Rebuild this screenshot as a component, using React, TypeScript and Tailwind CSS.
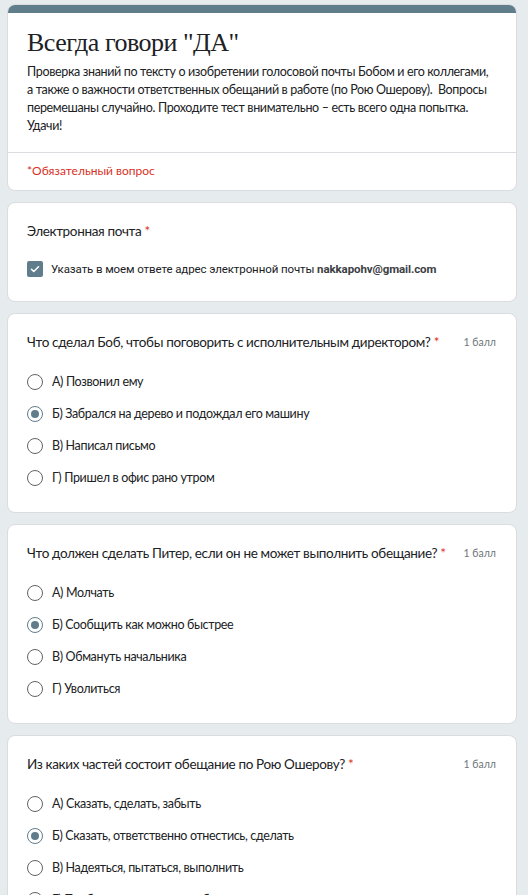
import React from "react";

const body = { fontFamily: "Lato, 'Noto Sans', sans-serif" };

function Radio({ checked }: { checked?: boolean }) {
  return (
    <span
      className={
        "flex h-[16px] w-[16px] shrink-0 items-center justify-center rounded-full border-[1.5px] " +
        (checked ? "border-[#607d8b]" : "border-[#5f6368]")
      }
    >
      {checked && <span className="h-[8px] w-[8px] rounded-full bg-[#607d8b]" />}
    </span>
  );
}

function Question({
  title,
  options,
  selected,
}: {
  title: string;
  options: string[];
  selected: number;
}) {
  return (
    <div className="rounded-[8px] border border-[#dadce0] bg-white pl-[19px] pr-[20px] pt-[18px] pb-[18px]">
      <div className="flex items-center justify-between">
        <div className="whitespace-nowrap text-[13.5px] leading-[20px] tracking-[-0.35px] text-[#202124]">
          {title}
          <span className="text-[#d93025]"> *</span>
        </div>
        <div className="shrink-0 whitespace-nowrap text-[10.5px] leading-[20px] text-[#70757a]">1 балл</div>
      </div>
      <div className="mt-[14px] flex flex-col">
        {options.map((o, i) => (
          <div key={i} className="flex h-[32px] items-center">
            <Radio checked={i === selected} />
            <span className="ml-[9px] whitespace-nowrap text-[12.5px] tracking-[-0.35px] text-[#202124]">{o}</span>
          </div>
        ))}
      </div>
    </div>
  );
}

const descLines = [
  "Проверка знаний по тексту о изобретении голосовой почты Бобом и его коллегами,",
  "а также о важности ответственных обещаний в работе (по Рою Ошерову).\u00a0 Вопросы",
  "перемешаны случайно. Проходите тест внимательно – есть всего одна попытка.",
  "Удачи!",
];

export default function App() {
  return (
    <div className="min-h-[895px] bg-[#e6ebee] pt-[4px] pb-[20px]" style={body}>
      <div className="ml-[7px] flex w-[510px] flex-col gap-[11px]">
        <div className="overflow-hidden rounded-[8px] border border-[#dadce0] bg-white">
          <div className="h-[8px] bg-[#607d8b]" />
          <div className="px-[19px] pt-[12px] pb-[17px]">
            <div
              className="text-[26px] leading-[36px] tracking-[-0.5px] text-[#202124]"
              style={{ fontFamily: "'Liberation Serif', serif" }}
            >
              Всегда говори "ДА"
            </div>
            <div className="mt-[2px] flex flex-col text-[12.5px] leading-[18px] tracking-[-0.35px] text-[#202124]">
              {descLines.map((l, i) => (
                <div key={i} className="whitespace-nowrap">
                  {l}
                </div>
              ))}
            </div>
          </div>
          <div className="h-px bg-[#dadce0]" />
          <div className="px-[19px] pt-[10px] pb-[11px] text-[12px] leading-[16px] text-[#d93025]">
            *Обязательный вопрос
          </div>
        </div>

        <div className="rounded-[8px] border border-[#dadce0] bg-white px-[19px] pt-[18px] pb-[24px]">
          <div className="text-[13.5px] leading-[20px] tracking-[-0.35px] text-[#202124]">
            Электронная почта<span className="text-[#d93025]"> *</span>
          </div>
          <div className="mt-[20px] flex items-center">
            <span className="flex h-[16px] w-[16px] items-center justify-center rounded-[2px] bg-[#607d8b]">
              <svg width="12" height="12" viewBox="0 0 24 24" fill="none">
                <path d="M5 12.5l4.5 4.5L19 7.5" stroke="white" strokeWidth="3.2" strokeLinecap="round" strokeLinejoin="round" />
              </svg>
            </span>
            <span
              className="ml-[8px] whitespace-nowrap text-[11.5px] leading-[16px] tracking-[-0.1px] text-[#202124]"
              style={{ fontFamily: "Roboto, 'Liberation Sans', sans-serif" }}
            >
              Указать в моем ответе адрес электронной почты{" "}
              <span className="font-bold text-[#3c4043]">nakkapohv@gmail.com</span>
            </span>
          </div>
        </div>

        <Question
          title="Что сделал Боб, чтобы поговорить с исполнительным директором?"
          selected={1}
          options={[
            "А) Позвонил ему",
            "Б) Забрался на дерево и подождал его машину",
            "В) Написал письмо",
            "Г) Пришел в офис рано утром",
          ]}
        />
        <Question
          title="Что должен сделать Питер, если он не может выполнить обещание?"
          selected={1}
          options={[
            "А) Молчать",
            "Б) Сообщить как можно быстрее",
            "В) Обмануть начальника",
            "Г) Уволиться",
          ]}
        />
        <Question
          title="Из каких частей состоит обещание по Рою Ошерову?"
          selected={1}
          options={[
            "А) Сказать, сделать, забыть",
            "Б) Сказать, ответственно отнестись, сделать",
            "В) Надеяться, пытаться, выполнить",
            "Г) Пообещать, отложить, забыть",
          ]}
        />
      </div>
    </div>
  );
}
